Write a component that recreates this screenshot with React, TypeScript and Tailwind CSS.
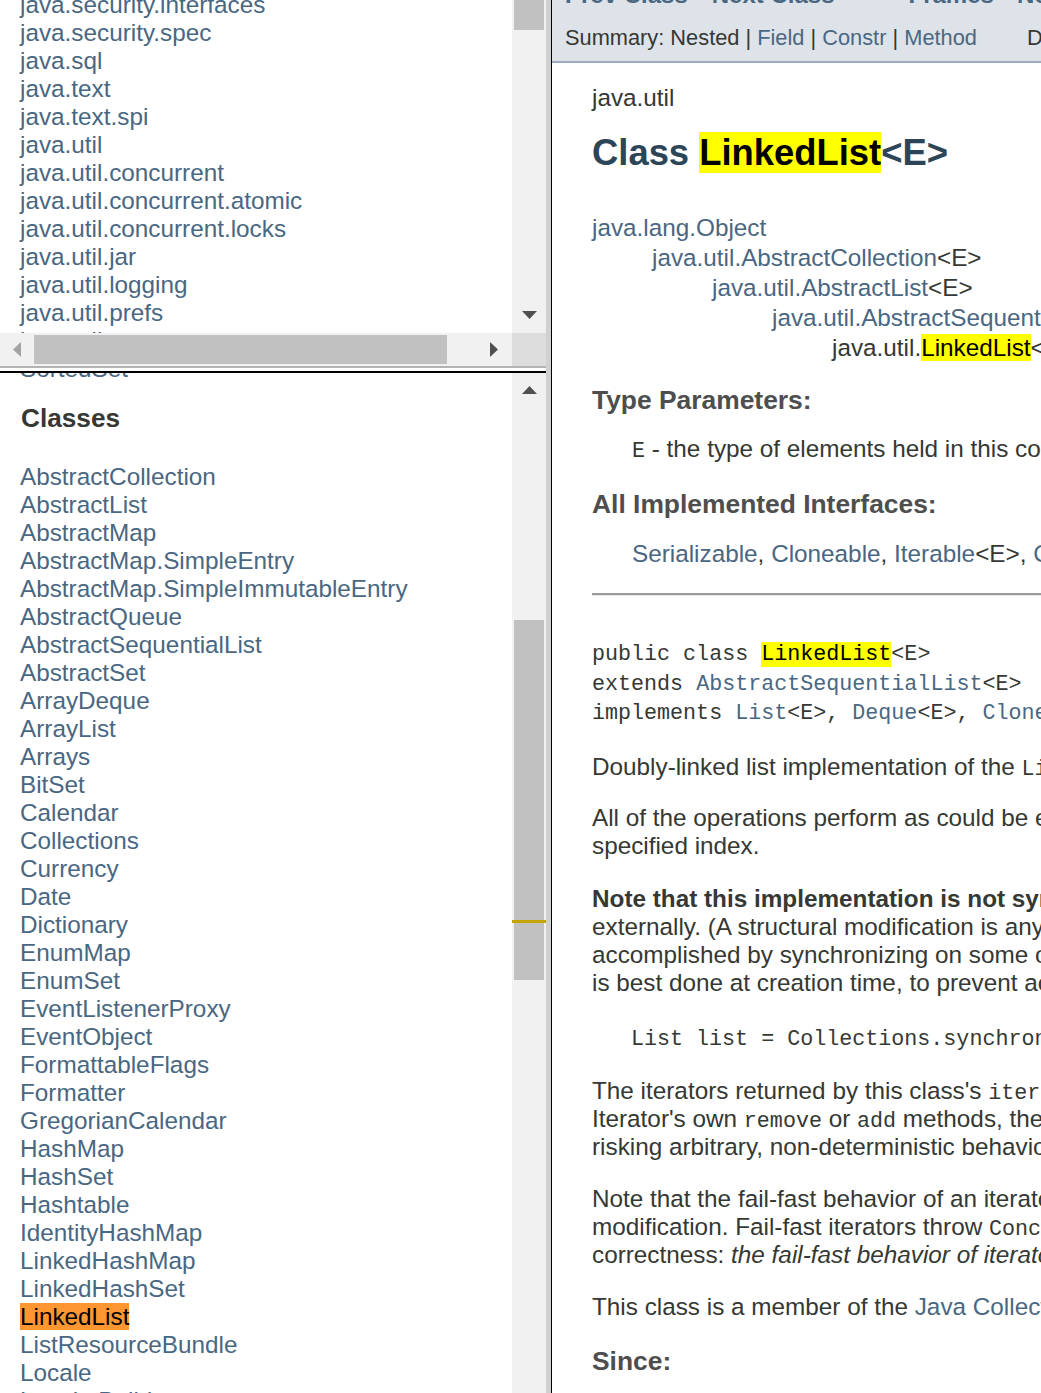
const packages = [
  "java.security.interfaces",
  "java.security.spec",
  "java.sql",
  "java.text",
  "java.text.spi",
  "java.util",
  "java.util.concurrent",
  "java.util.concurrent.atomic",
  "java.util.concurrent.locks",
  "java.util.jar",
  "java.util.logging",
  "java.util.prefs",
  "java.util.regex",
  "java.util.spi",
];

const classes = [
  "AbstractCollection",
  "AbstractList",
  "AbstractMap",
  "AbstractMap.SimpleEntry",
  "AbstractMap.SimpleImmutableEntry",
  "AbstractQueue",
  "AbstractSequentialList",
  "AbstractSet",
  "ArrayDeque",
  "ArrayList",
  "Arrays",
  "BitSet",
  "Calendar",
  "Collections",
  "Currency",
  "Date",
  "Dictionary",
  "EnumMap",
  "EnumSet",
  "EventListenerProxy",
  "EventObject",
  "FormattableFlags",
  "Formatter",
  "GregorianCalendar",
  "HashMap",
  "HashSet",
  "Hashtable",
  "IdentityHashMap",
  "LinkedHashMap",
  "LinkedHashSet",
  "LinkedList",
  "ListResourceBundle",
  "Locale",
  "Locale.Builder",
  "Locale.LanguageRange",
];

const link = "text-[#4a6782]";
const mono = "font-['Liberation_Mono',monospace] text-[21.7px] leading-none";

function Arrow({ dir, color }: { dir: "up" | "down" | "left" | "right"; color: string }) {
  const pts = {
    up: "0,8 15,8 7.5,0",
    down: "0,0 15,0 7.5,8",
    left: "8,0 8,15 0,7.5",
    right: "0,0 0,15 8,7.5",
  }[dir];
  const vertical = dir === "up" || dir === "down";
  return (
    <svg width={vertical ? 15 : 8} height={vertical ? 8 : 15} viewBox={vertical ? "0 0 15 8" : "0 0 8 15"}>
      <polygon points={pts} fill={color} />
    </svg>
  );
}

function Hl({ children, orange }: { children: React.ReactNode; orange?: boolean }) {
  return <span className={`${orange ? "bg-[#ff9632]" : "bg-[#ffff00]"} text-black`}>{children}</span>;
}

function Line({ children, className = "" }: { children: React.ReactNode; className?: string }) {
  return <div className={`h-[28px] whitespace-nowrap leading-[28px] ${className}`}>{children}</div>;
}

function LeftFrames() {
  return (
    <div className="flex w-[546px] shrink-0 flex-col">
      {/* packages frame */}
      <div className="flex h-[333px]">
        <div className="flex-1 overflow-hidden pl-5">
          <ul className="-mt-[9px]">
            {packages.map((p) => (
              <li key={p} className={`h-[28px] whitespace-nowrap text-[24.3px] leading-[28px] ${link}`}>
                {p}
              </li>
            ))}
          </ul>
        </div>
        <div className="flex w-[34px] flex-col bg-[#f1f1f1]">
          <div className="mx-[2px] h-[30px] bg-[#c1c1c1]" />
          <div className="flex-1" />
          <div className="flex h-[34px] items-center justify-center pb-[2px]">
            <Arrow dir="down" color="#505050" />
          </div>
        </div>
      </div>
      <div className="flex h-[33px]">
        <div className="flex flex-1 items-center bg-[#f1f1f1]">
          <div className="flex w-[34px] justify-center">
            <Arrow dir="left" color="#a3a3a3" />
          </div>
          <div className="h-[29px] w-[413px] bg-[#c1c1c1]" />
          <div className="flex flex-1 justify-end pr-[14px]">
            <Arrow dir="right" color="#505050" />
          </div>
        </div>
        <div className="w-[34px] bg-[#dcdcdc]" />
      </div>
      <div className="h-[2px] bg-[#b4b4b4]" />
      <div className="h-[3px] bg-white" />
      <div className="h-[2px] bg-black" />

      {/* classes frame */}
      <div className="flex min-h-0 flex-1">
        <div className="flex-1 overflow-hidden pl-5">
          <div className={`-mt-[18px] h-[28px] text-[24.3px] leading-[28px] ${link}`}>SortedSet</div>
          <h2 className="mt-[19px] h-[32px] pl-px text-[26.2px] font-bold leading-[32px] text-[#353833]">Classes</h2>
          <ul className="mt-[29px]">
            {classes.map((c) => (
              <li key={c} className={`h-[28px] whitespace-nowrap text-[24.3px] leading-[28px] ${link}`}>
                {c === "LinkedList" ? <Hl orange>{c}</Hl> : c}
              </li>
            ))}
          </ul>
        </div>
        <div className="relative flex w-[34px] flex-col bg-[#f1f1f1]">
          <div className="flex h-[34px] items-center justify-center">
            <Arrow dir="up" color="#505050" />
          </div>
          <div className="h-[213px]" />
          <div className="mx-[2px] h-[360px] bg-[#c1c1c1]" />
          <div className="absolute left-0 right-0 top-[547px] h-[3px] bg-[#c4a400]" />
        </div>
      </div>
    </div>
  );
}

function RightFrame() {
  return (
    <div className="min-w-0 flex-1 overflow-hidden text-[#353833]">
      <div className="h-[63px] overflow-hidden border-b-2 border-[#9eadc0] bg-[#dee3e9] pl-[13px]">
        <div className={`-mt-[17px] flex h-[24px] whitespace-nowrap text-[24px] font-bold leading-[24px] ${link}`}>
          <span>Prev Class</span>
          <span className="ml-[24px]">Next Class</span>
          <span className="ml-[74px]">Frames</span>
          <span className="ml-[23px]">No Frames</span>
        </div>
        <div className="mt-[20px] flex h-[22px] whitespace-nowrap text-[21.8px] leading-[22px]">
          <span>
            Summary: Nested | <span className={link}>Field</span> | <span className={link}>Constr</span> |{" "}
            <span className={link}>Method</span>
          </span>
          <span className="ml-[50px]">Detail: Field | Constr | Method</span>
        </div>
      </div>

      <div className="pl-[40px] text-[24.3px]">
        <Line className="mt-[21px]">java.util</Line>
        <h2 className="mt-[19px] h-[44px] whitespace-nowrap text-[36.4px] font-bold leading-[44px] text-[#2c4557]">
          Class <Hl>LinkedList</Hl>&lt;E&gt;
        </h2>

        <div className="mt-[38px] whitespace-nowrap leading-[30px]">
          <div className={link}>java.lang.Object</div>
          <div className="pl-[60px]">
            <span className={link}>java.util.AbstractCollection</span>&lt;E&gt;
          </div>
          <div className="pl-[120px]">
            <span className={link}>java.util.AbstractList</span>&lt;E&gt;
          </div>
          <div className="pl-[180px]">
            <span className={link}>java.util.AbstractSequentialList</span>&lt;E&gt;
          </div>
          <div className="pl-[240px]">
            java.util.<Hl>LinkedList</Hl>&lt;E&gt;
          </div>
        </div>

        <div className="mt-[21px] h-[32px] text-[26.4px] font-bold leading-[32px] text-[#4e4e4e]">Type Parameters:</div>
        <Line className="mt-[19px] pl-[40px]">
          <span className={mono}>E</span> - the type of elements held in this collection
        </Line>
        <div className="mt-[25px] h-[32px] text-[26.4px] font-bold leading-[32px] text-[#4e4e4e]">
          All Implemented Interfaces:
        </div>
        <Line className="mt-[20px] pl-[40px]">
          <span className={link}>Serializable</span>, <span className={link}>Cloneable</span>,{" "}
          <span className={link}>Iterable</span>&lt;E&gt;, <span className={link}>Collection</span>&lt;E&gt;,{" "}
          <span className={link}>Deque</span>&lt;E&gt;, <span className={link}>List</span>&lt;E&gt;
        </Line>

        <div className="mt-[25px] h-[3px] border-t-2 border-[#9a9a9a] bg-[#e6e6e6]" />

        <pre className="mt-[44px] font-['Liberation_Mono',monospace] text-[21.7px] leading-[29.5px]">
          {"public class "}
          <Hl>LinkedList</Hl>
          {"<E>\nextends "}
          <span className={link}>AbstractSequentialList</span>
          {"<E>\nimplements "}
          <span className={link}>List</span>
          {"<E>, "}
          <span className={link}>Deque</span>
          {"<E>, "}
          <span className={link}>Cloneable</span>
          {", "}
          <span className={link}>Serializable</span>
        </pre>

        <Line className="mt-[24px]">
          Doubly-linked list implementation of the <span className={mono}>List</span> and{" "}
          <span className={mono}>Deque</span> interfaces.
        </Line>

        <div className="mt-[23px]">
          <Line>All of the operations perform as could be expected for a doubly-linked list.</Line>
          <Line>specified index.</Line>
        </div>

        <div className="mt-[25px]">
          <Line>
            <b>Note that this implementation is not synchronized.</b> If multiple threads access a linked list
          </Line>
          <Line>externally. (A structural modification is any operation that adds or deletes</Line>
          <Line>accomplished by synchronizing on some object that naturally encapsulates</Line>
          <Line>is best done at creation time, to prevent accidental unsynchronized access</Line>
        </div>

        <pre className="mt-[28px] h-[29.5px] pl-[39px] font-['Liberation_Mono',monospace] text-[21.7px] leading-[29.5px]">
          {"List list = Collections.synchronizedList(new LinkedList(...));"}
        </pre>

        <div className="mt-[23px]">
          <Line>
            The iterators returned by this class's <span className={mono}>iterator</span> and{" "}
            <span className={mono}>listIterator</span>
          </Line>
          <Line>
            Iterator's own <span className={mono}>remove</span> or <span className={mono}>add</span> methods, the
            iterator will throw a
          </Line>
          <Line>risking arbitrary, non-deterministic behavior at an undetermined time</Line>
        </div>

        <div className="mt-[24px]">
          <Line>Note that the fail-fast behavior of an iterator cannot be guaranteed</Line>
          <Line>
            modification. Fail-fast iterators throw <span className={mono}>ConcurrentModificationException</span>
          </Line>
          <Line>
            correctness: <i>the fail-fast behavior of iterators should be used only to detect bugs.</i>
          </Line>
        </div>

        <Line className="mt-[24px]">
          This class is a member of the <span className={link}>Java Collections Framework</span>.
        </Line>

        <div className="mt-[24px] h-[32px] text-[26.4px] font-bold leading-[32px] text-[#4e4e4e]">Since:</div>
      </div>
    </div>
  );
}

export default function App() {
  return (
    <div className="flex h-[1393px] w-[1041px] overflow-hidden bg-white font-['Liberation_Sans',Arial,sans-serif]">
      <LeftFrames />
      <div className="w-[5px] shrink-0 bg-[#d0d0d0]" />
      <div className="w-px shrink-0 bg-black" />
      <RightFrame />
    </div>
  );
}
